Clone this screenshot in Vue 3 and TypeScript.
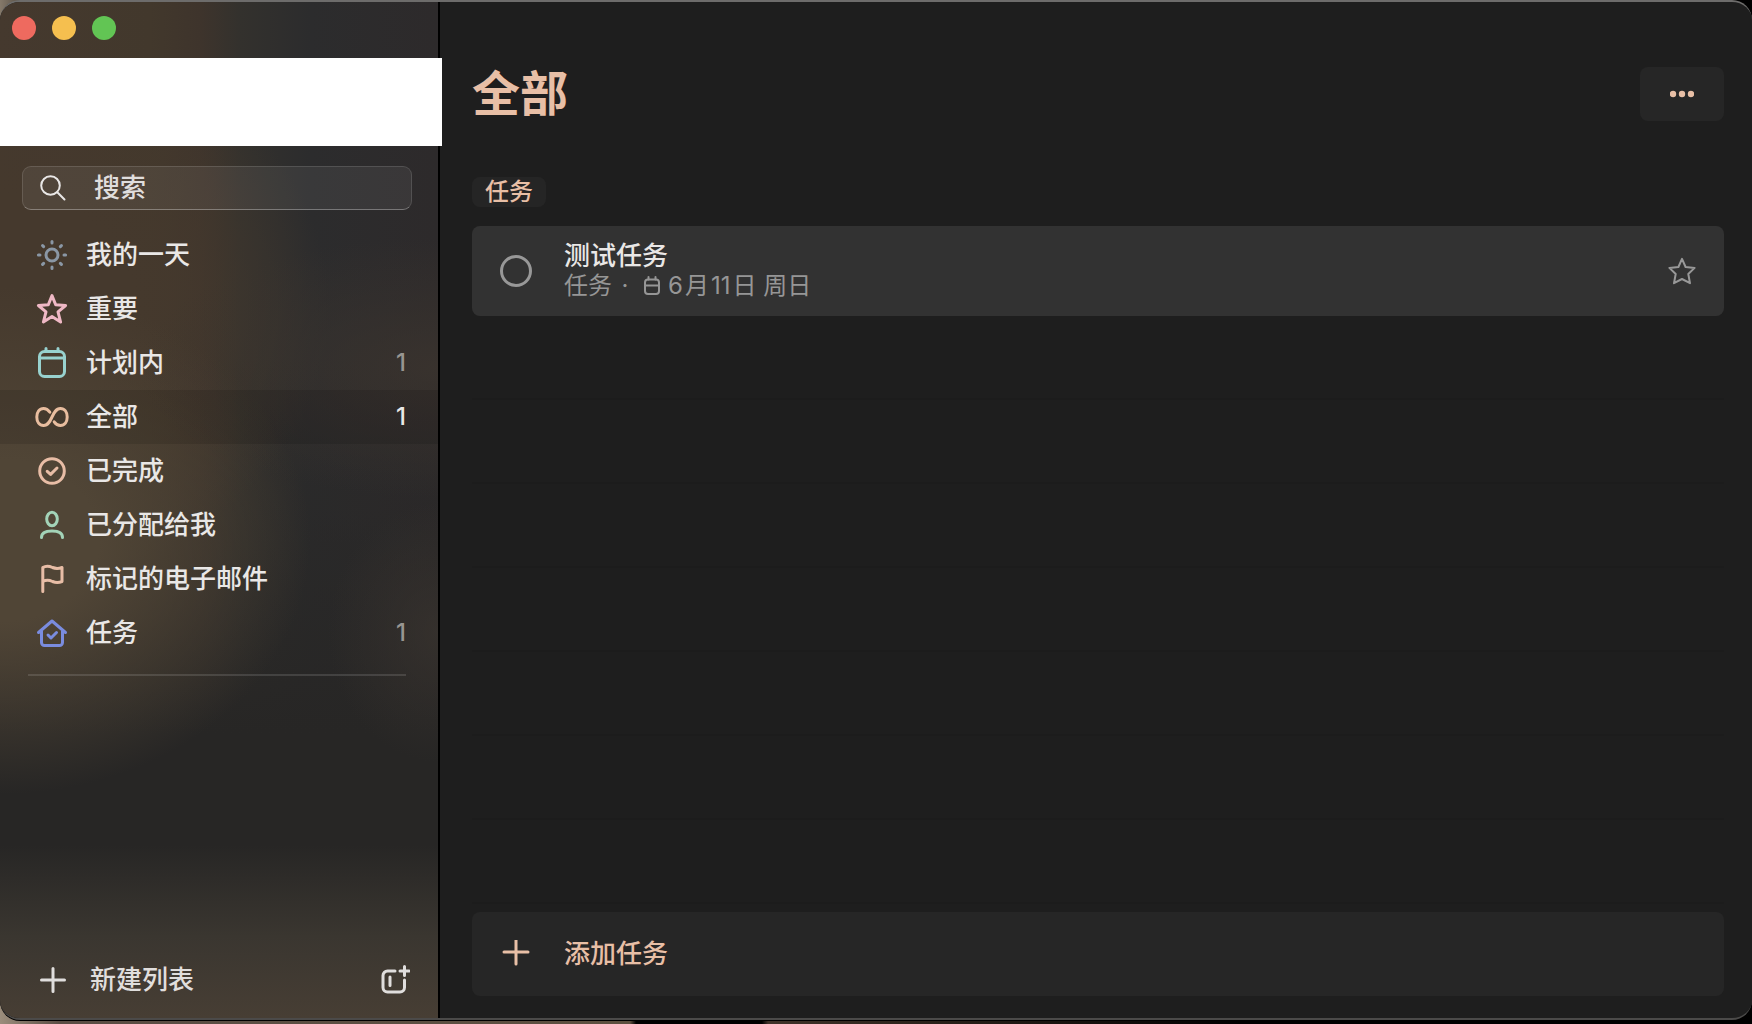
<script setup lang="ts">
import { ref } from 'vue'

interface ListItem {
  id: string
  label: string
  color: string
  count?: number
}

const lists: ListItem[] = [
  { id: 'day', label: '我的一天', color: '#8a97a5' },
  { id: 'important', label: '重要', color: '#efb8c5' },
  { id: 'planned', label: '计划内', color: '#98d2cf', count: 1 },
  { id: 'all', label: '全部', color: '#e8bd9f', count: 1 },
  { id: 'done', label: '已完成', color: '#e8bda6' },
  { id: 'assigned', label: '已分配给我', color: '#a3d3b8' },
  { id: 'flagged', label: '标记的电子邮件', color: '#e8bda6' },
  { id: 'tasks', label: '任务', color: '#7a8cdf', count: 1 },
]

const active = ref('all')
const query = ref('')
const completed = ref(false)
</script>

<template>
  <div class="desktop">
    <div class="window">
      <aside class="sidebar">
        <div class="titlebar">
          <button class="light close" aria-label="关闭"></button>
          <button class="light minimize" aria-label="最小化"></button>
          <button class="light zoom" aria-label="缩放"></button>
        </div>
        <div class="account"></div>

        <label class="search">
          <svg class="search-icon" viewBox="0 0 26 26" aria-hidden="true">
            <circle cx="10.500" cy="10.500" r="9.300" />
            <path d="M17.300 17.300 24.500 24.500" />
          </svg>
          <input v-model="query" type="text" placeholder="搜索" aria-label="搜索" />
        </label>

        <nav class="lists">
          <button
            v-for="item in lists"
            :key="item.id"
            class="list"
            :class="{ active: item.id === active }"
            @click="active = item.id"
          >
            <svg class="list-icon" viewBox="0 0 36 36" :style="{ color: item.color }" aria-hidden="true">
              <g v-if="item.id === 'day'">
                <circle cx="18" cy="18" r="6" />
                <path
                  d="M18 4.400v1.600M18 30v1.600M4.400 18H6M30 18h1.600M8.600 8.600l1 1M26.400 26.400l1 1M8.600 27.400l1-1M26.400 9.600l1-1"
                />
              </g>
              <path
                v-else-if="item.id === 'important'"
                d="M18 4.600 21.700 13.700 31.600 14.500 24 20.900 26.600 31 18 25.600 9.400 31 12 20.900 4.400 14.500 14.300 13.700Z"
              />
              <g v-else-if="item.id === 'planned'">
                <rect x="5.500" y="6.500" width="25" height="25" rx="5" />
                <path d="M5.500 13h25M12 3.500v3M24 3.500v3" />
              </g>
              <path
                v-else-if="item.id === 'all'"
                d="M15.800 13.200C13.800 10.400 12 9.500 9.600 9.500 5.300 9.500 2.800 13.200 2.800 18s2.500 8.500 6.800 8.500c9 0 7.800-17 16.800-17 4.300 0 6.800 3.700 6.800 8.500s-2.500 8.500-6.800 8.500c-2.400 0-4.200-.9-6.200-3.700"
              />
              <g v-else-if="item.id === 'done'">
                <circle cx="18" cy="18" r="12.300" />
                <path d="M13.200 18.300 16.600 21.400 23 15" />
              </g>
              <g v-else-if="item.id === 'assigned'">
                <ellipse cx="18" cy="12" rx="5.300" ry="6.700" />
                <path d="M7.500 30.500C7.500 26 11.500 24 18 24s10.500 2 10.500 6.500" />
              </g>
              <path
                v-else-if="item.id === 'flagged'"
                d="M8.800 30.500V6.500C12 4.500 15 4.800 18.500 6.500c3.500 1.500 6 1.300 9.500 0V20.500c-3.500 1.500-6 1.500-9.500 0-3.500-1.600-6.500-1.600-9.700 0"
              />
              <g v-else>
                <path d="M4.500 17.500 18 6 31.500 17.500M7.500 16v11.500a3 3 0 0 0 3 3h15a3 3 0 0 0 3-3V16" />
                <path d="M14 20 17 23 22.500 17.500" />
              </g>
            </svg>
            <span class="list-label">{{ item.label }}</span>
            <span v-if="item.count" class="list-count">{{ item.count }}</span>
          </button>
        </nav>
        <hr class="separator" />

        <footer class="sidebar-footer">
          <button class="new-list">
            <svg class="plus-icon" viewBox="0 0 28 28" aria-hidden="true"><path d="M14 2.500v23M2.500 14h23" /></svg>
            新建列表
          </button>
          <button class="new-group" aria-label="新建组">
            <svg viewBox="0 0 30 30" aria-hidden="true">
              <path d="M15 6H7.500A4.500 4.500 0 0 0 3 10.500v12A4.500 4.500 0 0 0 7.500 27H20a4.500 4.500 0 0 0 4.500-4.500V15M24.500 1.500v9M20 6h9M10 12v8.500" />
            </svg>
          </button>
        </footer>
      </aside>

      <main class="content">
        <header class="heading">
          <h1>全部</h1>
          <button class="more" aria-label="更多选项">
            <svg viewBox="0 0 24 8" aria-hidden="true">
              <circle cx="3" cy="4" r="3.200" /><circle cx="12" cy="4" r="3.200" /><circle cx="21" cy="4" r="3.200" />
            </svg>
          </button>
        </header>

        <h2 class="group">任务</h2>

        <article class="task">
          <input v-model="completed" class="check" type="checkbox" aria-label="完成 测试任务" />
          <div class="task-body">
            <div class="task-title">测试任务</div>
            <div class="task-meta">
              <span>任务</span>
              <span class="dot">·</span>
              <svg class="date-icon" viewBox="0 0 18 20" aria-hidden="true">
                <rect x="2" y="3.500" width="14" height="14.500" rx="3" />
                <path d="M2 9.500h14M5.500 1v2.500M12.500 1v2.500" />
              </svg>
              <span class="date"><span>6</span><span>月</span><span>11</span><span>日 周日</span></span>
            </div>
          </div>
          <button class="star" aria-label="标记为重要">
            <svg viewBox="0 0 28 28" aria-hidden="true">
              <path d="M14 1.800 17.600 10 26.600 10.900 20.300 17 22 26.200 14 22 6 26.200 7.700 17 1.400 10.900 10.400 10Z" />
            </svg>
          </button>
        </article>

        <div class="empty-rows"></div>

        <button class="add-task">
          <svg class="plus-icon" viewBox="0 0 28 28" aria-hidden="true"><path d="M14 0v24M2 12h24" /></svg>
          添加任务
        </button>
      </main>
    </div>
  </div>
</template>

<style>
body {
  margin: 0;
  background: #000;
}
</style>

<style scoped>
.desktop {
  display: flex;
  box-sizing: border-box;
  min-height: 100vh;
  padding-bottom: 4px;
  background:
    linear-gradient(to right, #9b8d7c, #5a4d44 60px, #5d5040 630px, #000 636px, #000 762px, #40332a 768px, #2e251d 900px, #000 1240px) bottom / 100% 24px no-repeat,
    linear-gradient(to right, #85796a, #000 60px);
  font-family: Inter, "Noto Sans CJK SC", sans-serif;
  font-size: 26px;
  font-weight: 500;
  line-height: 32px;
  color: #e9e7e6;
}

.window {
  display: flex;
  flex: 1;
  min-width: 0;
  overflow: hidden;
  border-top: 2px solid #6d6c6b;
  border-bottom: 2px solid #4b4a49;
  border-radius: 20px;
  background: #1e1e1e;
  box-shadow: 0 1px 0 #000;
}

button {
  padding: 0;
  border: 0;
  background: none;
  color: inherit;
  font: inherit;
  text-align: left;
}

svg {
  display: block;
  fill: none;
  stroke: currentColor;
  stroke-width: 3;
  stroke-linecap: round;
  stroke-linejoin: round;
}

.sidebar {
  display: flex;
  flex: 0 0 440px;
  flex-direction: column;
  box-sizing: border-box;
  min-width: 0;
  border-right: 2px solid #000;
  background:
    linear-gradient(to bottom, transparent 83%, #3a3630 92%, #473e34 100%),
    radial-gradient(ellipse 110px 130px at 100% 62%, #3a342fb0, #3a342f00),
    radial-gradient(ellipse 300px 130px at 100% 36%, #3b342ed0, #3b342e00),
    radial-gradient(ellipse 330px 270px at 0 53%, #504536 30%, #50453600 94%),
    radial-gradient(ellipse 330px 280px at 0 30%, #45392d 40%, #45392d00 100%),
    linear-gradient(to bottom, #27262500 35%, #272625 72%),
    linear-gradient(to right, #45392e, #42382c 150px, #3e342c 200px, #33312d 240px, #2c2c2d 310px, #2d2a2b);
}

.titlebar {
  display: flex;
  gap: 16px;
  height: 40px;
  padding: 14px 12px 2px;
}

.light {
  width: 24px;
  height: 24px;
  border-radius: 50%;
}

.close { background: #ee6a5f; }
.minimize { background: #f5bf4f; }
.zoom { background: #62c554; }

.account {
  position: relative;
  flex: 0 0 88px;
  margin-right: -4px;
  background: #fff;
}

.search {
  display: flex;
  align-items: center;
  gap: 28px;
  box-sizing: border-box;
  height: 44px;
  margin: 20px 26px 0 22px;
  padding: 0 17px;
  border: 1px solid #ffffff20;
  border-bottom-color: #ffffff50;
  border-radius: 9px;
  background: #ffffff10;
}

.search-icon {
  flex: none;
  width: 26px;
  height: 26px;
  stroke-width: 2;
}

.search input {
  flex: 1;
  min-width: 0;
  padding: 0;
  border: 0;
  outline: 0;
  background: none;
  color: inherit;
  font: inherit;
}

.search input::placeholder {
  color: #e0dedd;
  opacity: 1;
}

.lists {
  display: flex;
  flex-direction: column;
  margin-top: 18px;
}

.list {
  display: flex;
  align-items: center;
  height: 54px;
  padding: 0 32px 0 34px;
}

.list.active {
  background: #0000001c;
}

.list-icon {
  width: 36px;
  height: 36px;
}

.list-label {
  flex: 1;
  margin-left: 16px;
}

.list-count {
  color: #989591;
  font-size: 24px;
}

.active .list-count {
  color: #e9e7e6;
}

.separator {
  width: auto;
  height: 2px;
  margin: 14px 32px 0 28px;
  border: 0;
  background: #ffffff20;
}

.sidebar-footer {
  display: flex;
  align-items: center;
  justify-content: space-between;
  height: 76px;
  margin-top: auto;
  padding: 0 28px 0 39px;
}

.new-list {
  display: flex;
  align-items: center;
  gap: 23px;
  color: #e0dedd;
}

.plus-icon {
  width: 28px;
  height: 28px;
}

.new-group svg {
  width: 30px;
  height: 30px;
  color: #e0dedd;
}

.content {
  display: flex;
  flex: 1;
  flex-direction: column;
  min-width: 0;
  padding: 65px 28px 22px 32px;
}

.heading {
  display: flex;
  align-items: center;
  justify-content: space-between;
  height: 54px;
  color: #e8bfa6;
}

h1 {
  margin: 0;
  font-size: 48px;
  font-weight: 700;
  line-height: 56px;
}

.more {
  display: flex;
  align-items: center;
  justify-content: center;
  width: 84px;
  height: 54px;
  border-radius: 8px;
  background: #262626;
}

.more svg {
  width: 24px;
  height: 8px;
  fill: currentColor;
  stroke: none;
}

.group {
  align-self: flex-start;
  margin: 56px 0 19px;
  padding: 0 13px;
  border-radius: 8px;
  background: #252525;
  color: #e8bfa6;
  font-size: 24px;
  font-weight: 500;
  line-height: 30px;
}

.task {
  display: flex;
  align-items: center;
  box-sizing: border-box;
  height: 90px;
  padding: 0 28px;
  border-radius: 8px;
  background: #323232;
}

.check {
  appearance: none;
  box-sizing: border-box;
  width: 32px;
  height: 32px;
  margin: 0;
  border: 3px solid #989898;
  border-radius: 50%;
}

.check:checked {
  background: #989898;
}

.task-body {
  flex: 1;
  margin-left: 32px;
}

.task-title {
  line-height: 30px;
}

.task-meta {
  display: flex;
  align-items: center;
  color: #969696;
  font-size: 24px;
  font-weight: 400;
  line-height: 30px;
}

.date {
  display: flex;
  gap: 2px;
  font-kerning: none;
}

.dot {
  width: 8px;
  margin: 0 9px;
  text-align: center;
}

.date-icon {
  width: 18px;
  height: 20px;
  margin: 0 7px 0 5px;
  stroke-width: 2;
}

.star svg {
  width: 28px;
  height: 28px;
  color: #989898;
  stroke-width: 2;
}

.empty-rows {
  flex: 1;
  min-height: 84px;
  background: repeating-linear-gradient(to bottom, transparent 0 82px, #1c1c1c 82px 84px);
}

.add-task {
  display: flex;
  align-items: center;
  gap: 34px;
  height: 84px;
  padding: 0 30px;
  border-radius: 8px;
  background: #262626;
  color: #e8bfa6;
}
</style>
